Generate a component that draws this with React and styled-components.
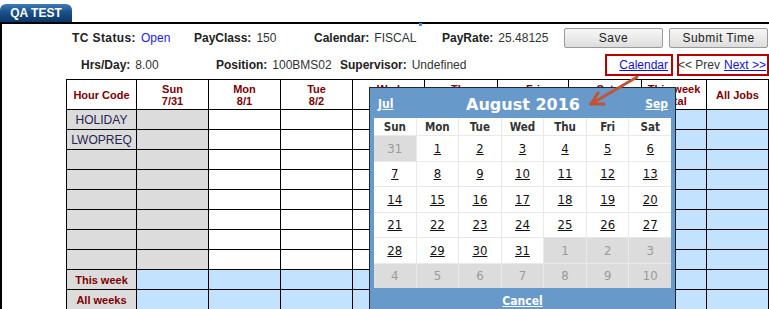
import React from 'react';
import styled, { createGlobalStyle } from 'styled-components';

const GlobalStyle = createGlobalStyle`
  html, body {
    margin: 0;
    padding: 0;
    background: #fff;
  }
  body {
    font-family: "Liberation Sans", Arial, sans-serif;
    font-size: 12px;
    color: #222;
    overflow: hidden;
  }
`;

const Page = styled.div`
  position: relative;
  width: 769px;
  height: 309px;
  overflow: hidden;
`;

const TabBar = styled.div`
  height: 22px;
  display: flex;
  align-items: flex-end;
`;

const Tab = styled.div`
  width: 72px;
  height: 18px;
  border-radius: 6px 6px 0 0;
  background: linear-gradient(#3f7bb8 0%, #1a5189 45%, #0c3768 100%);
  color: #fff;
  font-weight: bold;
  font-size: 12px;
  display: flex;
  align-items: center;
  justify-content: center;
`;

const Marker = styled.div`
  position: absolute;
  left: 419px;
  top: 23px;
  width: 3px;
  height: 3px;
  background: #3b8eea;
`;

const Panel = styled.div`
  border-top: 2px solid #000;
  border-left: 2px solid #000;
  height: 290px;
`;

const InfoRow = styled.div`
  display: flex;
  align-items: center;
  height: ${p => p.$h}px;
  padding-left: ${p => p.$pad}px;
  white-space: nowrap;
  font-size: 12px;
`;

const Field = styled.div`
  width: ${p => (p.$w ? `${p.$w}px` : 'auto')};
  flex: ${p => (p.$w ? 'none' : '1')};
`;

const Label = styled.b`
  color: #222;
  margin-right: 5px;
  letter-spacing: ${p => p.$ls || 0}px;
`;

const Value = styled.span`
  color: ${p => p.$color || '#333'};
`;

const Button = styled.button`
  width: 99px;
  height: 20px;
  margin-right: ${p => p.$mr || 0}px;
  padding: 0;
  border: 1px solid #9a9a9a;
  border-radius: 2px;
  background: linear-gradient(#f7f7f7, #dddddd);
  font-family: "Liberation Sans", Arial, sans-serif;
  font-size: 12px;
  letter-spacing: 0.5px;
  color: #222;
`;

const LinkBox = styled.div`
  box-sizing: border-box;
  width: ${p => p.$w}px;
  height: 22px;
  margin-left: ${p => p.$ml || 0}px;
  border: 2px solid #b80000;
  display: flex;
  align-items: center;
  justify-content: flex-end;
  padding-right: ${p => p.$pr || 2}px;
  gap: 4px;
  font-size: 12px;
`;

const Link = styled.a`
  color: #1010e0;
  text-decoration: underline;
`;

const Plain = styled.span`
  color: #333;
`;

const TimeGrid = styled.div`
  display: grid;
  grid-template-columns: 69px 71px 71px 71px 71px 72px 70px 72px 64px 61px;
  grid-template-rows: 29px;
  grid-auto-rows: 19px;
  gap: 1px;
  padding: 1px;
  background: #000;
  width: max-content;
  margin-left: 64px;
`;

const Cell = styled.div`
  background: ${p => p.$bg};
  display: flex;
  align-items: center;
  justify-content: center;
  text-align: center;
  font-size: ${p => (p.$head ? 11 : 12)}px;
  line-height: 12px;
  font-weight: ${p => (p.$head ? 'bold' : 'normal')};
  color: ${p => (p.$head ? '#800000' : '#24244c')};
`;

const GRAY = '#dcdcdc';
const BLUE = '#c2e2fd';
const WHITE = '#fff';

const heads = [
  ['Hour Code'],
  ['Sun', '7/31'],
  ['Mon', '8/1'],
  ['Tue', '8/2'],
  ['Wed', '8/3'],
  ['Thu', '8/4'],
  ['Fri', '8/5'],
  ['Sat', '8/6'],
  ['This week', 'Total'],
  ['All Jobs'],
];

const codes = ['HOLIDAY', 'LWOPREQ', '', '', '', '', '', ''];

const rowColors = [GRAY, GRAY, WHITE, WHITE, WHITE, WHITE, WHITE, WHITE, BLUE, BLUE];

const CalPopup = styled.div`
  position: absolute;
  left: 369px;
  top: 87px;
  width: 307px;
  box-sizing: border-box;
  border: 1px solid #1e2a36;
  background: #6899cb;
  padding: 2px 4px 0;
  font-family: "DejaVu Sans Condensed", "DejaVu Sans", Verdana, sans-serif;
`;

const CalHeader = styled.div`
  display: grid;
  grid-template-columns: 1fr auto 1fr;
  align-items: center;
  height: 28px;
  padding: 0 3px 0 4px;
  color: #fff;
`;

const NavLink = styled.a`
  color: #fff;
  font-weight: bold;
  font-size: 12px;
  text-decoration: underline;
  justify-self: ${p => p.$end ? 'end' : 'start'};
`;

const Title = styled.div`
  font-family: "DejaVu Sans", Verdana, sans-serif;
  font-weight: bold;
  font-size: 16px;
`;

const CalGrid = styled.div`
  display: grid;
  grid-template-columns: repeat(7, 1fr);
  grid-template-rows: 17px;
  grid-auto-rows: 24.5px;
  gap: 1px;
  background: #e9e9e9;
`;

const DayName = styled.div`
  background: #fff;
  display: flex;
  align-items: center;
  justify-content: center;
  font-weight: bold;
  font-size: 11.5px;
  color: #333;
`;

const DayCell = styled.div`
  background: ${p => (p.$other ? '#dcdcdc' : '#fff')};
  display: flex;
  align-items: center;
  justify-content: center;
  font-size: 13px;
  color: ${p => (p.$other ? '#9a9a9a' : '#111')};
  text-decoration: ${p => (p.$other ? 'none' : 'underline')};
`;

const CalFooter = styled.div`
  height: 26px;
  display: flex;
  justify-content: center;
  padding-top: 6px;
`;

const Arrow = styled.svg`
  position: absolute;
  left: 0;
  top: 0;
  pointer-events: none;
`;

const calDays = [
  [31, true], [1], [2], [3], [4], [5], [6],
  [7], [8], [9], [10], [11], [12], [13],
  [14], [15], [16], [17], [18], [19], [20],
  [21], [22], [23], [24], [25], [26], [27],
  [28], [29], [30], [31], [1, true], [2, true], [3, true],
  [4, true], [5, true], [6, true], [7, true], [8, true], [9, true], [10, true],
];

export default function App() {
  return (
    <Page>
      <GlobalStyle />
      <TabBar>
        <Tab>QA TEST</Tab>
      </TabBar>
      <Marker />
      <Panel>
        <InfoRow $h={27} $pad={70}>
          <Field $w={122}><Label $ls={0.4}>TC Status:</Label><Value $color="#2020ee">Open</Value></Field>
          <Field $w={120}><Label>PayClass:</Label><Value>150</Value></Field>
          <Field $w={128}><Label>Calendar:</Label><Value>FISCAL</Value></Field>
          <Field $w={122}><Label>PayRate:</Label><Value>25.48125</Value></Field>
          <Button $mr={6}>Save</Button>
          <Button>Submit Time</Button>
        </InfoRow>
        <InfoRow $h={28} $pad={79}>
          <Field $w={135}><Label>Hrs/Day:</Label><Value>8.00</Value></Field>
          <Field $w={124}><Label>Position:</Label><Value>100BMS02</Value></Field>
          <Field><Label>Supervisor:</Label><Value>Undefined</Value></Field>
          <LinkBox $w={68} $pr={3}><Link>Calendar</Link></LinkBox>
          <LinkBox $w={92} $ml={4} $pr={1}>
            <Plain>&lt;&lt; Prev</Plain>
            <Link>Next &gt;&gt;</Link>
          </LinkBox>
        </InfoRow>
        <TimeGrid>
          {heads.map((h, i) => (
            <Cell key={'h' + i} $bg={WHITE} $head>
              <div>{h.map((t, j) => <div key={j}>{t}</div>)}</div>
            </Cell>
          ))}
          {codes.map((code, r) =>
            rowColors.map((bg, c) => (
              <Cell key={r + '-' + c} $bg={bg}>{c === 0 ? code : ''}</Cell>
            ))
          )}
          {['This week', 'All weeks'].map(label =>
            rowColors.map((_, c) => (
              <Cell key={label + c} $bg={c === 0 ? GRAY : BLUE} $head={c === 0}>
                {c === 0 ? label : ''}
              </Cell>
            ))
          )}
        </TimeGrid>
      </Panel>

      <CalPopup>
        <CalHeader>
          <NavLink>Jul</NavLink>
          <Title>August 2016</Title>
          <NavLink $end>Sep</NavLink>
        </CalHeader>
        <CalGrid>
          {['Sun', 'Mon', 'Tue', 'Wed', 'Thu', 'Fri', 'Sat'].map(d => (
            <DayName key={d}>{d}</DayName>
          ))}
          {calDays.map(([n, other], i) => (
            <DayCell key={i} $other={other}>{n}</DayCell>
          ))}
        </CalGrid>
        <CalFooter>
          <NavLink>Cancel</NavLink>
        </CalFooter>
      </CalPopup>

      <Arrow width="769" height="309">
        <g stroke="#c4532f" strokeWidth="3" strokeLinecap="round" fill="none">
          <line x1="637" y1="77" x2="591" y2="104" />
          <line x1="591" y1="104" x2="598" y2="93" />
          <line x1="591" y1="104" x2="604" y2="104" />
        </g>
      </Arrow>
    </Page>
  );
}
